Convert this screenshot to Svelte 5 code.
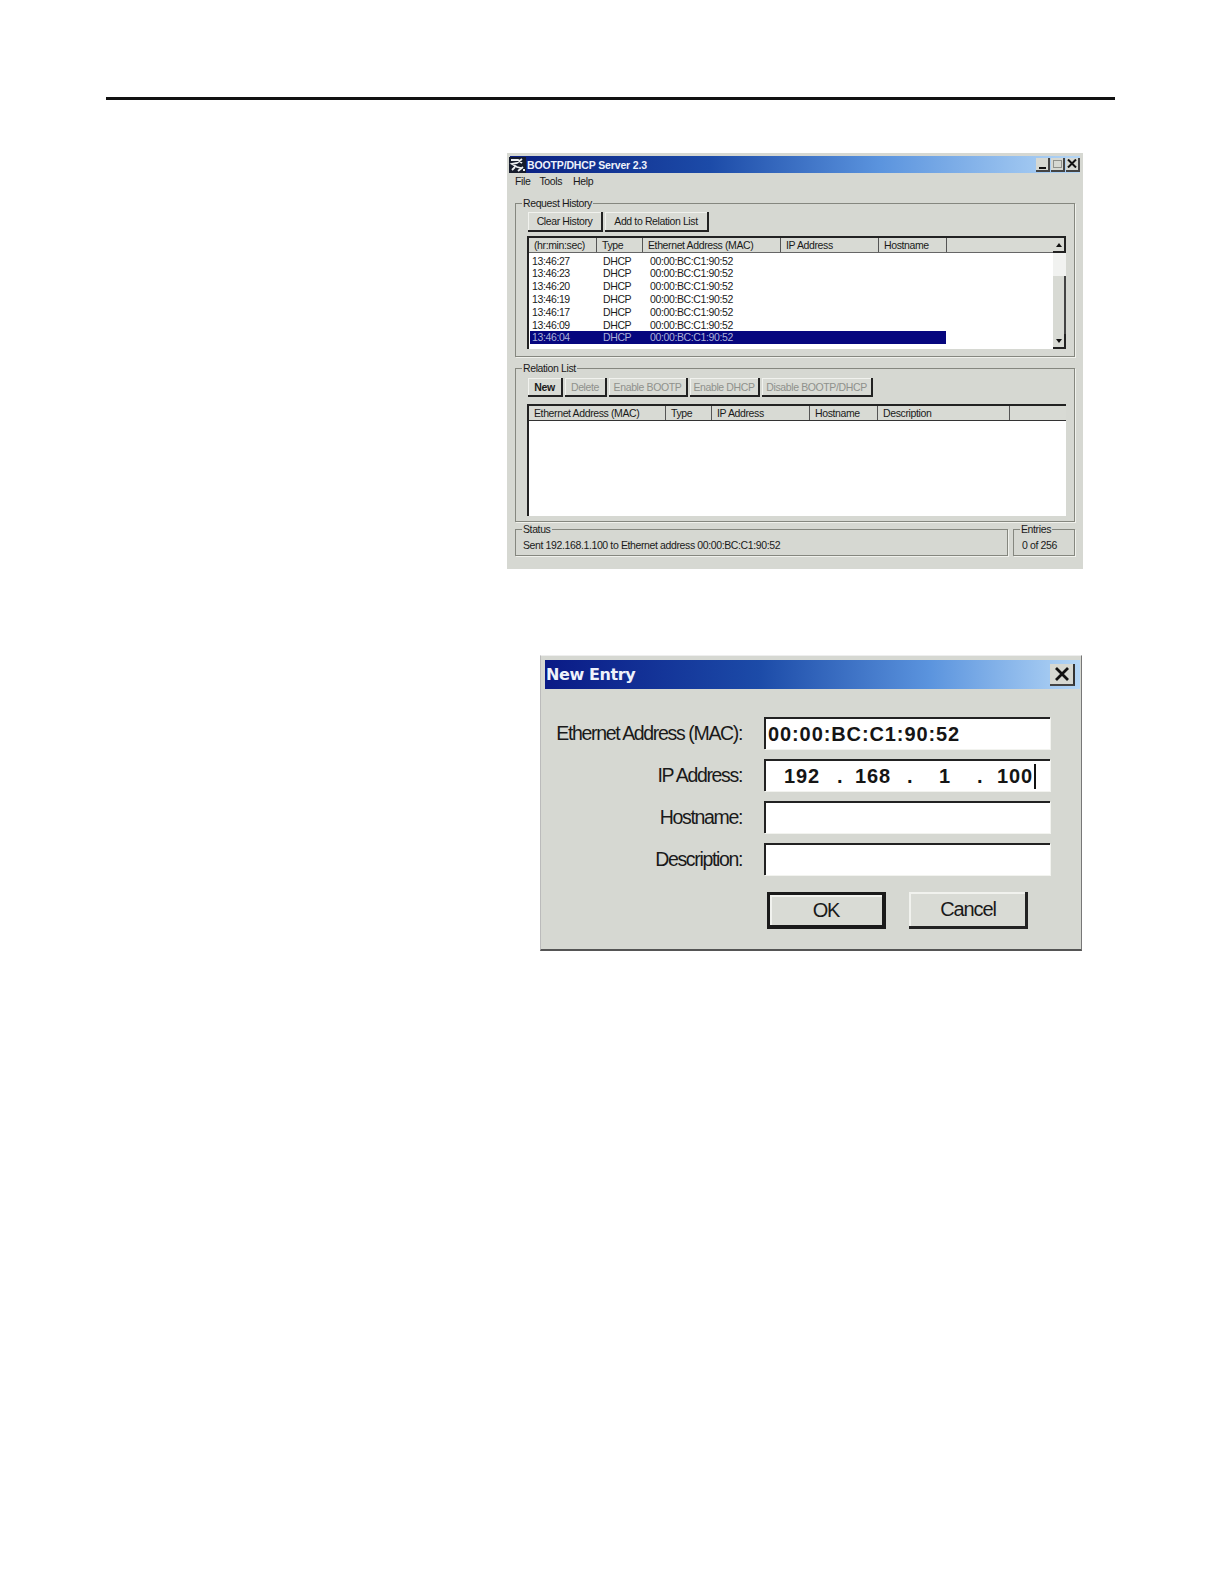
<script>
  const historyRows = [
    ['13:46:27', 'DHCP', '00:00:BC:C1:90:52'],
    ['13:46:23', 'DHCP', '00:00:BC:C1:90:52'],
    ['13:46:20', 'DHCP', '00:00:BC:C1:90:52'],
    ['13:46:19', 'DHCP', '00:00:BC:C1:90:52'],
    ['13:46:17', 'DHCP', '00:00:BC:C1:90:52'],
    ['13:46:09', 'DHCP', '00:00:BC:C1:90:52'],
    ['13:46:04', 'DHCP', '00:00:BC:C1:90:52']
  ];
  const histCols = [
    ['(hr:min:sec)', 68], ['Type', 46], ['Ethernet Address (MAC)', 138], ['IP Address', 98], ['Hostname', 68], ['', 119]
  ];
  const relCols = [
    ['Ethernet Address (MAC)', 137], ['Type', 46], ['IP Address', 98], ['Hostname', 68], ['Description', 132], ['', 56]
  ];
  const disabled = [['Delete', 42], ['Enable BOOTP', 79], ['Enable DHCP', 70], ['Disable BOOTP/DHCP', 111]];
</script>

<div class="page">
  <div class="rule"></div>

  <div class="figures">
    <section class="win main">
      <div class="title">
        <svg class="appicon" width="17" height="16" viewBox="0 0 17 16">
          <rect width="17" height="16" fill="#161c2c" />
          <path d="M2 3h7l4 3M13 2L8 6 3 7l5 3 4 1M3 13l3-3M9 14l5-4M14 13h2" stroke="#eef0f2" stroke-width="1.8" fill="none" />
        </svg>
        <span class="ttext">BOOTP/DHCP Server 2.3</span>
        <span class="caps">
          <span class="cap"><i class="minbar"></i></span>
          <span class="cap"><i class="maxbox"></i></span>
          <span class="cap">
            <svg width="10" height="9" viewBox="0 0 10 9"><path d="M1 0.5l8 8M9 0.5l-8 8" stroke="#111" stroke-width="2" /></svg>
          </span>
        </span>
      </div>

      <nav class="menu"><span class="m1">File</span><span class="m2">Tools</span><span>Help</span></nav>

      <fieldset class="group history">
        <legend>Request History</legend>
        <div class="btns top">
          <span class="btn b1">Clear History</span>
          <span class="btn b2">Add to Relation List</span>
        </div>
        <div class="listbox hist">
          <div class="head">
            {#each histCols as c}
              <span class="hcell" style="width:{c[1]}px">{c[0]}</span>
            {/each}
          </div>
          <div class="body">
            <div class="rows">
              {#each historyRows as r, i}
                <div class="row" class:sel={i === historyRows.length - 1}>
                  <span class="c1">{r[0]}</span><span class="c2">{r[1]}</span><span class="c3">{r[2]}</span>
                </div>
              {/each}
            </div>
            <div class="scroll">
              <span class="arrow first"><i class="up"></i></span>
              <span class="gap"></span>
              <span class="thumb"></span>
              <span class="arrow"><i class="down"></i></span>
            </div>
          </div>
        </div>
      </fieldset>

      <fieldset class="group relation">
        <legend>Relation List</legend>
        <div class="btns">
          <span class="btn new">New</span>
          {#each disabled as d}
            <span class="btn off" style="width:{d[1]}px">{d[0]}</span>
          {/each}
        </div>
        <div class="listbox rel">
          <div class="head">
            {#each relCols as c}
              <span class="hcell" style="width:{c[1]}px">{c[0]}</span>
            {/each}
          </div>
          <div class="body empty"></div>
        </div>
      </fieldset>

      <div class="bottom">
        <fieldset class="group status">
          <legend>Status</legend>
          <div>Sent 192.168.1.100 to Ethernet address 00:00:BC:C1:90:52</div>
        </fieldset>
        <fieldset class="group entries">
          <legend>Entries</legend>
          <div>0 of 256</div>
        </fieldset>
      </div>
    </section>

    <section class="win dialog">
      <div class="dtitle">
        <span>New Entry</span>
        <span class="dclose">
          <svg width="16" height="14" viewBox="0 0 16 14"><path d="M2 1l12 12M14 1L2 13" stroke="#111" stroke-width="2.8" /></svg>
        </span>
      </div>
      <div class="form">
        <span class="label">Ethernet Address (MAC):</span>
        <div class="input mono">00:00:BC:C1:90:52</div>
        <span class="label">IP Address:</span>
        <div class="input mono ip">
          <span class="o1">192</span><span class="dot">.</span><span class="o2">168</span><span class="dot">.</span><span class="o3">1</span><span class="dot">.</span><span class="o4">100</span><i class="caret"></i>
        </div>
        <span class="label">Hostname:</span>
        <div class="input"></div>
        <span class="label">Description:</span>
        <div class="input"></div>
      </div>
      <div class="dbtns">
        <span class="dbtn ok">OK</span>
        <span class="dbtn cancel">Cancel</span>
      </div>
    </section>
  </div>
</div>

<style>
  :global(body) { margin: 0; background: #fff; }
  .page {
    width: 1224px; height: 1584px; box-sizing: border-box; padding: 97px 0 0 106px;
    font-family: "Liberation Sans", Arial, sans-serif; color: #1a1a1a; overflow: hidden;
  }
  .rule { height: 3px; width: 1009px; background: #111; }
  .figures { display: flex; flex-direction: column; align-items: flex-end; width: 977px; padding-top: 53px; }
  .win { background: #d6d8d2; box-sizing: border-box; }
  .main { width: 576px; height: 416px; padding: 3px 3px 0 3px; font-size: 10.5px; letter-spacing: -0.38px; }
  .title {
    height: 17px; display: flex; align-items: center;
    background: linear-gradient(90deg, #0a1f80 0%, #1c4ba8 35%, #5b94de 65%, #b4d6f6 100%);
  }
  .appicon { flex: none; margin-left: -1px; }
  .ttext { font-weight: 700; margin-left: 1px; letter-spacing: -0.14px; color: #eef2fb; }
  .caps { margin-left: auto; display: flex; gap: 1px; height: 15px; align-items: center; }
  .cap {
    width: 14px; height: 14px; display: flex; align-items: center; justify-content: center; position: relative;
    border-right: 2px solid #444; border-bottom: 2px solid #444; box-sizing: border-box; background: #d6d8d2;
  }
  .minbar { width: 7px; height: 2px; background: #111; position: absolute; left: 3px; bottom: 1px; }
  .maxbox { width: 9px; height: 8px; border: 1px solid #8f918c; box-sizing: border-box; }
  .menu { display: flex; height: 16px; align-items: center; padding-left: 5px; gap: 10px; }
  .m1 { margin-right: -1px; }
  .m2 { margin-right: 1px; }
  .group {
    margin: 0; padding: 0; border: 1px solid #85877f; box-sizing: border-box; min-width: 0; position: relative;
    box-shadow: 1px 1px 0 #f0f1ec;
  }
  .group legend { margin-left: 6px; padding: 0 1px; line-height: 12px; }
  .history legend, .relation legend { margin-left: -5px; }
  .history { margin: 8px 5px 0 5px; height: 160px; padding-left: 11px; }
  .btns { display: flex; margin-left: 1px; }
  .btns.top { gap: 2px; margin-top: 3px; height: 20px; }
  .btn {
    height: 100%; display: flex; align-items: center; justify-content: center; box-sizing: border-box; white-space: nowrap;
    border-right: 2px solid #222; border-bottom: 2px solid #222; background: #d9dbd5;
    box-shadow: inset 1px 1px 0 #f1f2ee;
  }
  .b1 { width: 75px; }
  .b2 { width: 104px; }
  .listbox { width: 539px; border-top: 2px solid #222; border-left: 2px solid #222; box-sizing: border-box; margin-top: 4px; }
  .head { display: flex; height: 14px; background: #d8dad4; border-bottom: 1px solid #333; }
  .hcell { flex: none; box-sizing: border-box; padding-left: 5px; line-height: 14px; border-right: 1px solid #555; white-space: pre; }
  .hcell:last-child { border-right: none; }
  .hist .head { border-bottom: 1px solid #666; }
  .body { background: #fff; display: flex; height: 96px; }
  .rows { flex: 1; padding-top: 1.6px; }
  .row { display: flex; height: 12.8px; width: 416px; line-height: 12.8px; margin-left: 1px; padding-left: 2px; box-sizing: border-box; }
  .row.sel { background: #06067e; color: #aab0d8; }
  .c1 { width: 71px; }
  .c2 { width: 47px; }
  .c3 { width: 110px; }
  .scroll { width: 13px; display: flex; flex-direction: column; }
  .arrow {
    height: 15px; flex: none; display: flex; align-items: center; justify-content: center;
    background: #d8dad4; border-right: 2px solid #222; border-bottom: 2px solid #222; box-sizing: border-box;
  }
  .arrow.first { margin-top: -15px; }
  .arrow i { width: 0; height: 0; border-left: 3px solid transparent; border-right: 3px solid transparent; }
  .up { border-bottom: 4px solid #111; }
  .down { border-top: 4px solid #111; }
  .gap { height: 23px; flex: none; background: #f1f2f0; }
  .thumb { flex: 1; background: #d8dad4; border-right: 2px solid #444; box-sizing: border-box; }
  .relation { margin: 5px 5px 0 5px; height: 160px; padding-left: 11px; }
  .relation .btns { gap: 2px; margin-top: 4px; height: 19px; }
  .new { width: 35px; font-weight: 700; }
  .off { color: #8f918c; }
  .rel { margin-top: 7px; }
  .rel .head { height: 14px; }
  .body.empty { height: 95px; }
  .bottom { display: flex; gap: 5px; padding: 0 5px; margin-top: 1px; }
  .bottom .group { height: 33px; }
  .status { width: 493px; }
  .status div { padding-left: 7px; line-height: 14px; margin-top: 3px; }
  .entries { width: 62px; }
  .entries div { padding-left: 8px; line-height: 14px; margin-top: 3px; }

  .dialog {
    width: 542px; height: 296px; margin-top: 86px; margin-right: 1px; padding: 4px 1px 0 4px;
    border-right: 1px solid #777; border-bottom: 2px solid #555; border-top: 1px solid #eee; border-left: 1px solid #bbb;
  }
  .dtitle {
    height: 29px; display: flex; align-items: center; justify-content: space-between; padding-left: 1px;
    background: linear-gradient(90deg, #0a1a86 0%, #1c4ba8 40%, #5b94de 72%, #b4d6f6 100%);
    color: #eef2fb; font-weight: 700; font-size: 16px; font-family: "DejaVu Sans", sans-serif; letter-spacing: -0.4px;
  }
  .dclose {
    width: 25px; height: 22px; background: #d6d8d2; display: flex; align-items: center; justify-content: center;
    border-right: 2px solid #333; border-bottom: 2px solid #444; box-sizing: border-box; margin-right: 5px;
  }
  .form {
    display: grid; grid-template-columns: 197px 286px; column-gap: 22px; row-gap: 10px; align-items: center; margin-top: 28px;
  }
  .label { text-align: right; font-size: 19.5px; letter-spacing: -1.35px; white-space: nowrap; }
  .input {
    height: 32px; background: #fff; border-top: 2px solid #222; border-left: 2px solid #222; box-sizing: border-box;
    box-shadow: 1px 1px 0 #f2f3ef; display: flex; align-items: center; position: relative;
  }
  .mono { font-weight: 700; font-size: 20px; letter-spacing: 0.9px; color: #151515; padding-left: 2px; white-space: pre; }
  .ip { padding-left: 0; }
  .ip span { position: absolute; }
  .o1 { left: 18px; } .o2 { left: 89px; } .o3 { left: 173px; } .o4 { left: 231px; }
  .ip .dot:nth-child(2) { left: 71px; } .ip .dot:nth-child(4) { left: 141px; } .ip .dot:nth-child(6) { left: 211px; }
  .caret { position: absolute; left: 268px; top: 3px; width: 2px; height: 25px; background: #111; }
  .dbtns { display: flex; gap: 23px; margin: 17px 0 0 222px; }
  .dbtn {
    width: 119px; height: 37px; display: flex; align-items: center; justify-content: center; font-size: 20px; letter-spacing: -1.1px; box-sizing: border-box;
    background: #d9dbd5; border-right: 3px solid #222; border-bottom: 3px solid #222; box-shadow: inset 2px 2px 0 #f1f2ee;
  }
  .dbtn.cancel { padding-left: 2px; }
  .dbtn.ok { border: 3px solid #1a1a1a; border-right-width: 4px; border-bottom-width: 4px; }
</style>
